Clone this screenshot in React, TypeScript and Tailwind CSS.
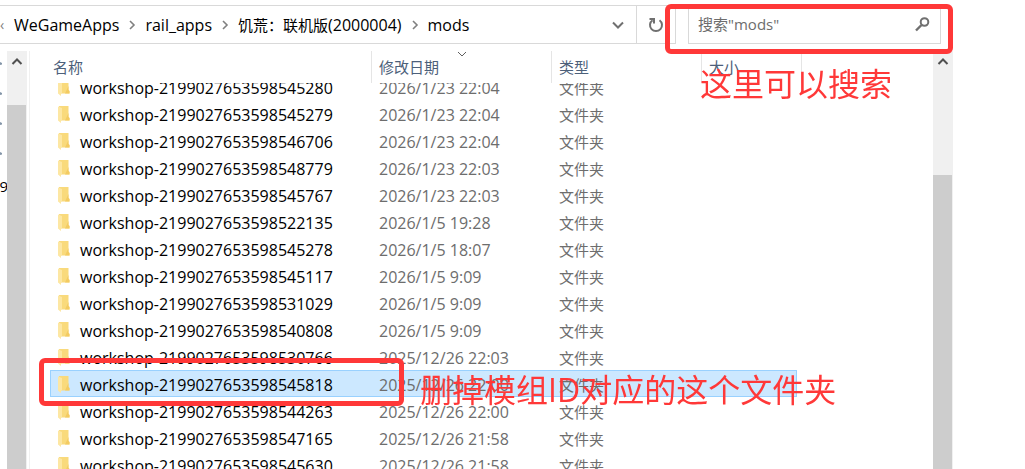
import { FC, useEffect, useRef } from "react";

const folders = [
  { name: "workshop-2199027653598545280", date: "2026/1/23 22:04" },
  { name: "workshop-2199027653598545279", date: "2026/1/23 22:04" },
  { name: "workshop-2199027653598546706", date: "2026/1/23 22:04" },
  { name: "workshop-2199027653598548779", date: "2026/1/23 22:03" },
  { name: "workshop-2199027653598545767", date: "2026/1/23 22:03" },
  { name: "workshop-2199027653598522135", date: "2026/1/5 19:28" },
  { name: "workshop-2199027653598545278", date: "2026/1/5 18:07" },
  { name: "workshop-2199027653598545117", date: "2026/1/5 9:09" },
  { name: "workshop-2199027653598531029", date: "2026/1/5 9:09" },
  { name: "workshop-2199027653598540808", date: "2026/1/5 9:09" },
  { name: "workshop-2199027653598530766", date: "2025/12/26 22:03" },
  { name: "workshop-2199027653598545818", date: "2025/12/26 22:00" },
  { name: "workshop-2199027653598544263", date: "2025/12/26 22:00" },
  { name: "workshop-2199027653598547165", date: "2025/12/26 21:58" },
  { name: "workshop-2199027653598545630", date: "2025/12/26 21:58" },
];

const selected = "workshop-2199027653598545818";

const FolderIcon: FC = () => (
  <svg className="h-[18px] w-3 shrink-0" viewBox="0 0 12 18">
    <path d="M1 0h9.500v11l1 1v2.500H3z" fill="#f9da7c" />
    <path d="M10.500 7v4l1 1v2.500H7z" fill="#f3cb62" />
    <path d="M0 0.500L4 2v12.500H3V17L0 14.500z" fill="#fde7a3" />
  </svg>
);

const Separator: FC = () => (
  <svg className="h-2.5 w-2 shrink-0" viewBox="0 0 8 10" fill="none">
    <path d="M2 1l4 4-4 4" stroke="#808080" strokeWidth="1.6" />
  </svg>
);

const ScrollArrow: FC = () => (
  <svg className="h-2 w-3" viewBox="0 0 12 8" fill="none">
    <path d="M1.500 7L6 2.500l4.500 4.500" stroke="#505050" strokeWidth="2" />
  </svg>
);

const Pin: FC = () => (
  <svg className="h-3 w-2" viewBox="0 0 8 12">
    <path d="M-3 3.500L-1 3l1 2 2 1v1.500L0 8l-3 1z" fill="#8496a9" />
  </svg>
);

const App: FC = () => {
  const listRef = useRef<HTMLDivElement>(null);

  useEffect(() => {
    // list is scrolled a little, so the first row is cut by the header
    if (listRef.current) listRef.current.scrollTop = 10;
  }, []);

  return (
    <div className="relative flex h-screen flex-col overflow-hidden bg-white pr-[72px] font-['Open_Sans','Noto_Sans_CJK_SC',sans-serif] text-base text-black">
      {/* Address bar and search */}
      <div className="flex shrink-0 gap-3 pt-[5px] pr-3">
        <div className="flex h-[39px] flex-1 border border-l-0 border-[#d9d9d9]">
          <nav className="flex flex-1 items-center overflow-hidden">
            <span className="w-3.5 text-sm text-[#808080]">‹</span>
            <div className="flex items-center gap-[9px] whitespace-nowrap">
              <a href="#wegameapps">WeGameApps</a>
              <Separator />
              <a href="#rail_apps">rail_apps</a>
              <Separator />
              <a href="#dst">
                <span className="text-[15px]">饥荒：联机版</span>(2000004)
              </a>
              <Separator />
              <a href="#mods">mods</a>
            </div>
          </nav>
          <button type="button" aria-label="展开" className="flex w-9 items-center justify-center">
            <svg className="h-2 w-3" viewBox="0 0 12 8" fill="none">
              <path d="M1 1.500L6 6.500l5-5" stroke="#707070" strokeWidth="2" />
            </svg>
          </button>
          <button
            type="button"
            aria-label="刷新"
            className="flex w-[39px] items-center justify-center border-l border-[#d9d9d9]"
          >
            <svg className="size-4" viewBox="0 0 16 16" fill="none" stroke="#707070" strokeWidth="2">
              <path d="M11.500 3.200A6 6 0 1 1 4.500 3.200" />
              <path d="M1.500 2H6v4.500" />
            </svg>
          </button>
        </div>
        <form className="flex h-[39px] w-[253px] items-center border border-[#d9d9d9] pr-2.5 pl-[9px]">
          <input
            type="search"
            aria-label="搜索"
            placeholder={'搜索"mods"'}
            className="min-w-0 flex-1 text-[15px] outline-none placeholder:text-[#6d6d6d]"
          />
          <svg className="size-4" viewBox="0 0 16 16" fill="none" stroke="#707070">
            <circle cx="10.500" cy="5" r="3.800" strokeWidth="2" />
            <path d="M7.500 8L2 13.500" strokeWidth="2.400" />
          </svg>
        </form>
      </div>

      <div className="mt-[7px] flex min-h-0 flex-1">
        {/* Navigation pane */}
        <aside className="w-[7px] shrink-0 overflow-hidden">
          <div className="flex flex-col gap-[18px] pt-1.5">
            <Pin />
            <Pin />
            <Pin />
            <Pin />
          </div>
          <div className="mt-4 flex w-2 justify-end text-[15px]">09</div>
        </aside>
        <div className="flex w-5 shrink-0 flex-col bg-[#f0f0f0]">
          <div className="flex h-[54px] justify-center pt-1.5">
            <ScrollArrow />
          </div>
          <div className="mr-px flex-1 bg-[#cdcdcd]" />
        </div>
        <div className="ml-0.5 w-px shrink-0 bg-[#f0f0f0]" />

        {/* File list */}
        <div ref={listRef} className="ml-5 min-w-0 flex-1 overflow-hidden">
          <table className="w-[752px] table-fixed border-separate border-spacing-0 text-left">
            <colgroup>
              <col className="w-[322px]" />
              <col className="w-[180px]" />
              <col className="w-[150px]" />
              <col className="w-[95px]" />
              <col className="w-[5px]" />
            </colgroup>
            <thead className="sticky top-0 z-10 bg-white text-[15px] text-[#4c607a]">
              <tr className="h-8">
                <th className="border-r border-[#e5e5e5] p-0 pl-[3px] font-normal">名称</th>
                <th className="relative border-r border-[#e5e5e5] p-0 pl-[7px] font-normal">
                  修改日期
                  <svg className="absolute top-0 left-1/2 h-1.5 w-2.5 -translate-x-1/2" viewBox="0 0 10 6" fill="none">
                    <path d="M1 1l4 4 4-4" stroke="#606060" />
                  </svg>
                </th>
                <th className="border-r border-[#e5e5e5] p-0 pl-[7px] font-normal">类型</th>
                <th colSpan={2} className="border-r border-[#e5e5e5] p-0 pl-[7px] font-normal">
                  大小
                </th>
              </tr>
            </thead>
            <tbody>
              {folders.map((folder) => {
                const cell =
                  folder.name === selected
                    ? "h-[27px] border-y border-[#99d1ff] bg-[#cce8ff] p-0 pt-0.5"
                    : "h-[27px] p-0 pt-0.5";
                return (
                  <tr key={folder.name} className="leading-5">
                    <td className={`${cell} ${folder.name === selected ? "border-l pl-[7px]" : "pl-2"}`}>
                      <div className="flex items-center gap-2.5">
                        <FolderIcon />
                        {folder.name}
                      </div>
                    </td>
                    <td className={`${cell} pl-[7px] text-[#6d6d6d]`}>{folder.date}</td>
                    <td className={`${cell} pl-[7px] text-[15px] text-[#6d6d6d]`}>文件夹</td>
                    <td className={`${cell} ${folder.name === selected ? "border-r" : ""}`}></td>
                    <td className="p-0"></td>
                  </tr>
                );
              })}
            </tbody>
          </table>
        </div>
        <div className="flex w-5 shrink-0 flex-col bg-[#f0f0f0]">
          <div className="flex h-[124px] justify-center pt-1.5">
            <ScrollArrow />
          </div>
          <div className="mr-px flex-1 bg-[#cdcdcd]" />
        </div>
      </div>

      {/* Annotations drawn over the window */}
      <div className="pointer-events-none absolute top-1 right-[72px] z-20 h-[50px] w-[288px] rounded-md border-5 border-[#ff3838]" />
      <p className="pointer-events-none absolute top-[62px] left-[700px] z-20 text-[32px] leading-[44px] whitespace-nowrap text-[#ff3838]">
        这里可以搜索
      </p>
      <div className="pointer-events-none absolute top-[358px] left-[39px] z-20 h-12 w-[365px] rounded-md border-5 border-[#ff3838]" />
      <p className="pointer-events-none absolute top-[368px] left-[420px] z-20 text-[32px] leading-[44px] whitespace-nowrap text-[#ff3838]">
        删掉模组ID对应的这个文件夹
      </p>
    </div>
  );
};

export default App;
